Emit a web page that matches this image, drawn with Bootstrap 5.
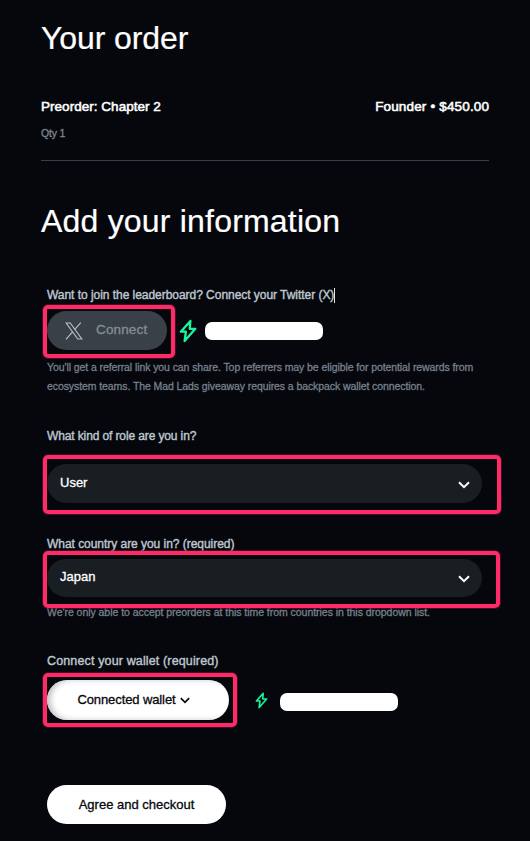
<!DOCTYPE html>
<html lang="en" data-bs-theme="dark">
<head>
<meta charset="utf-8">
<meta name="viewport" content="width=device-width, initial-scale=1">
<title>Your order</title>
<link href="https://cdn.jsdelivr.net/npm/bootstrap@5.3.0/dist/css/bootstrap.min.css" rel="stylesheet">
<style>
body{background:#05070c;color:#fff;font-family:"Liberation Sans",Arial,sans-serif;min-height:841px;overflow:hidden;-webkit-text-stroke:.3px currentColor}
.page{padding:18px 41px 0 41px}
.title{font-size:32px;line-height:40px;font-weight:400;letter-spacing:-.1px;white-space:nowrap;-webkit-text-stroke:.2px currentColor}
.title-info{letter-spacing:.2px}
.order-line{font-size:13.5px;line-height:20px;margin-top:39px;letter-spacing:.03px;-webkit-text-stroke:.55px currentColor}
.order-price{letter-spacing:.16px;margin-right:-.16px}
.qty{font-size:10.5px;line-height:14px;color:#80868f;margin-top:9px;letter-spacing:-.2px}
.rule{border-top:1px solid #373d46;margin:20px 0 40px}
.fields{padding-left:6px;width:441px}
.field-label{font-size:12px;line-height:16px;color:#bec6cf;letter-spacing:-.04px;white-space:nowrap;-webkit-text-stroke:.4px currentColor}
.label-role{letter-spacing:-.12px}
.label-wallet{font-size:12.5px;letter-spacing:.14px}
.help{font-size:10.5px;line-height:19px;color:#77808d;letter-spacing:-.085px;white-space:nowrap}
.caret{width:1px;height:15px;background:#dfe5ea}
.pill{border-radius:20px;font-size:13px;border:0;padding:0}
.pill-x{width:120px;height:39px;background:#3a4047;color:#858d97;font-size:13.5px;letter-spacing:.15px}
.pill-select{height:39px;background:#191e22;color:#fff;padding:0 12px 2px 13px}
.pill-light,.pill-light:hover{background:#fff;color:#05070c}
.pill-wallet{width:182px;height:40px;padding-right:9px;letter-spacing:-.1px;box-shadow:inset 4px 0 6px -1px #bbb}
.marked{position:relative}
.marked::after{content:"";position:absolute;inset:var(--t) var(--r) var(--b) -4px;border:4px solid #ff2a68;border-radius:5px;box-shadow:0 0 0 1px #6b163699;pointer-events:none}
.redacted{width:118px;height:18px;background:#fff;border-radius:7px}
</style>
<script src="https://cdn.jsdelivr.net/npm/bootstrap@5.3.0/dist/js/bootstrap.bundle.min.js" defer></script>
</head>
<body>
<svg width="0" height="0" class="d-none">
<symbol id="bolt" viewBox="0 0 18 24"><path d="M11.4 2 1.8 12.7h5.1L5.6 22 16.3 9.8h-5.6z" fill="none" stroke="#19f59b" stroke-width="2.3" stroke-linejoin="round"/></symbol>
<symbol id="chevron" viewBox="0 0 12 8"><path d="m1 1.2 5 5 5-5" fill="none" stroke="currentColor" stroke-width="2"/></symbol>
</svg>
<main class="page">
<h1 class="title mb-0">Your order</h1>
<div class="order-line d-flex justify-content-between"><span>Preorder: Chapter 2</span><span class="order-price">Founder • $450.00</span></div>
<div class="qty">Qty 1</div>
<div class="rule"></div>
<h2 class="title title-info mb-0">Add your information</h2>
<form class="fields">
<div class="field-label d-flex align-items-center" style="margin-top:46px"><span>Want to join the leaderboard? Connect your Twitter (X)</span><span class="caret"></span></div>
<div class="d-flex align-items-center" style="margin-top:8px">
<div class="marked" style="--t:-6px;--r:-8px;--b:-8px">
<button type="button" class="btn pill pill-x d-flex align-items-center"><svg class="ms-3" style="margin-right:11px" width="22" height="18" viewBox="0 0 22 18" fill="none" stroke="#b5bdc6" stroke-width="1.15"><path d="M3.2 1h4.1l11.5 16h-4.1zM17.8.7l-6.5 7.1M9.3 10.1 3 17.3"/></svg>Connect</button>
</div>
<svg style="margin-left:12px;margin-right:8px" width="18" height="24"><use href="#bolt"/></svg>
<div class="redacted"></div>
</div>
<div class="help" style="margin-top:8px">You'll get a referral link you can share. Top referrers may be eligible for potential rewards from<br>ecosystem teams. The Mad Lads giveaway requires a backpack wallet connection.</div>
<div class="field-label label-role" style="margin-top:32px">What kind of role are you in?</div>
<div class="marked" style="margin-top:20px;--t:-9px;--r:-19px;--b:-11px">
<div class="pill pill-select d-flex align-items-center justify-content-between"><span>User</span><svg class="mt-1" width="12" height="8"><use href="#chevron"/></svg></div>
</div>
<div class="field-label" style="margin-top:33px">What country are you in? (required)</div>
<div class="marked" style="margin-top:7px;--t:-8px;--r:-18px;--b:-11px">
<div class="pill pill-select d-flex align-items-center justify-content-between" style="height:38px"><span>Japan</span><svg class="mt-1" width="12" height="8"><use href="#chevron"/></svg></div>
</div>
<div class="help" style="margin-top:6px;letter-spacing:-.04px">We're only able to accept preorders at this time from countries in this dropdown list.</div>
<div class="field-label label-wallet" style="margin-top:31px">Connect your wallet (required)</div>
<div class="d-flex align-items-center" style="margin-top:11px">
<div class="marked" style="--t:-7px;--r:-8px;--b:-7px">
<button type="button" class="btn pill pill-light pill-wallet d-flex align-items-center justify-content-center gap-1">Connected wallet<svg width="10" height="7"><use href="#chevron"/></svg></button>
</div>
<svg style="margin-left:26px;margin-right:12px" width="13" height="17"><use href="#bolt"/></svg>
<div class="redacted" style="margin-top:3px"></div>
</div>
<button type="button" class="btn pill pill-light" style="width:179px;height:39px;margin-top:65px">Agree and checkout</button>
</form>
</main>
</body>
</html>
